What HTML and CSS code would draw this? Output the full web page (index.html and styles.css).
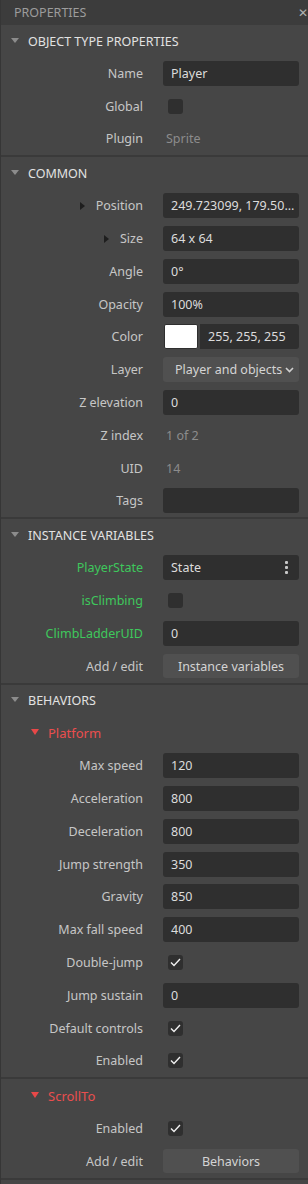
FILE: index.html
```html
<!DOCTYPE html>
<html lang="en">
<head>
    <meta charset="UTF-8">
    <meta name="viewport" content="width=device-width, initial-scale=1.0">
    <link rel="stylesheet" href="styles.css">
</head>
<body>
    <div class="panel">
        <div class="panel-title">
            <span>PROPERTIES</span>
            <span class="close-btn">✕</span>
        </div>

        <!-- object type -->
        <div class="section">
            <div class="section-head"><span class="caret"></span>OBJECT TYPE PROPERTIES</div>
            <div class="prop-grid">
                <div class="label">Name</div>
                <div class="value"><div class="field">Player</div></div>
                <div class="label">Global</div>
                <div class="value"><div class="check"></div></div>
                <div class="label">Plugin</div>
                <div class="value"><span class="readonly">Sprite</span></div>
            </div>
        </div>

        <!-- common -->
        <div class="section">
            <div class="section-head"><span class="caret"></span>COMMON</div>
            <div class="prop-grid">
                <div class="label"><span class="expander"></span>Position</div>
                <div class="value"><div class="field">249.723099, 179.50...</div></div>
                <div class="label"><span class="expander"></span>Size</div>
                <div class="value"><div class="field">64 x 64</div></div>
                <div class="label">Angle</div>
                <div class="value"><div class="field">0°</div></div>
                <div class="label">Opacity</div>
                <div class="value"><div class="field">100%</div></div>
                <div class="label">Color</div>
                <div class="value color-value">
                    <div class="swatch"></div>
                    <div class="field color-field">255, 255, 255</div>
                </div>
                <div class="label">Layer</div>
                <div class="value">
                    <div class="select">
                        Player and objects
                        <svg class="chevron" width="9" height="6" viewBox="0 0 9 6"><polyline points="1,1 4.5,4.5 8,1" fill="none" stroke="#d0d0d0" stroke-width="1.6"/></svg>
                    </div>
                </div>
                <div class="label">Z elevation</div>
                <div class="value"><div class="field">0</div></div>
                <div class="label">Z index</div>
                <div class="value"><span class="readonly">1 of 2</span></div>
                <div class="label">UID</div>
                <div class="value"><span class="readonly">14</span></div>
                <div class="label">Tags</div>
                <div class="value"><div class="field"></div></div>
            </div>
        </div>

        <!-- instance variables -->
        <div class="section">
            <div class="section-head"><span class="caret"></span>INSTANCE VARIABLES</div>
            <div class="prop-grid">
                <div class="label var">PlayerState</div>
                <div class="value">
                    <div class="field field-menu">
                        State
                        <span class="dots"><i></i><i></i><i></i></span>
                    </div>
                </div>
                <div class="label var">isClimbing</div>
                <div class="value"><div class="check"></div></div>
                <div class="label var">ClimbLadderUID</div>
                <div class="value"><div class="field">0</div></div>
                <div class="label">Add / edit</div>
                <div class="value"><div class="button">Instance variables</div></div>
            </div>
        </div>

        <!-- behaviors -->
        <div class="section">
            <div class="section-head"><span class="caret"></span>BEHAVIORS</div>
            <div class="prop-grid">
                <div class="sub-head"><span class="caret caret-red"></span>Platform</div>
                <div class="label">Max speed</div>
                <div class="value"><div class="field">120</div></div>
                <div class="label">Acceleration</div>
                <div class="value"><div class="field">800</div></div>
                <div class="label">Deceleration</div>
                <div class="value"><div class="field">800</div></div>
                <div class="label">Jump strength</div>
                <div class="value"><div class="field">350</div></div>
                <div class="label">Gravity</div>
                <div class="value"><div class="field">850</div></div>
                <div class="label">Max fall speed</div>
                <div class="value"><div class="field">400</div></div>
                <div class="label">Double-jump</div>
                <div class="value"><div class="check checked"><svg width="11" height="9" viewBox="0 0 11 9"><polyline points="1,4.5 4,7.5 10,1" fill="none" stroke="#f0f0f0" stroke-width="1.4"/></svg></div></div>
                <div class="label">Jump sustain</div>
                <div class="value"><div class="field">0</div></div>
                <div class="label">Default controls</div>
                <div class="value"><div class="check checked"><svg width="11" height="9" viewBox="0 0 11 9"><polyline points="1,4.5 4,7.5 10,1" fill="none" stroke="#f0f0f0" stroke-width="1.4"/></svg></div></div>
                <div class="label">Enabled</div>
                <div class="value"><div class="check checked"><svg width="11" height="9" viewBox="0 0 11 9"><polyline points="1,4.5 4,7.5 10,1" fill="none" stroke="#f0f0f0" stroke-width="1.4"/></svg></div></div>
            </div>
            <div class="prop-grid sub-section">
                <div class="sub-head"><span class="caret caret-red"></span>ScrollTo</div>
                <div class="label">Enabled</div>
                <div class="value"><div class="check checked"><svg width="11" height="9" viewBox="0 0 11 9"><polyline points="1,4.5 4,7.5 10,1" fill="none" stroke="#f0f0f0" stroke-width="1.4"/></svg></div></div>
                <div class="label">Add / edit</div>
                <div class="value"><div class="button">Behaviors</div></div>
            </div>
        </div>
        <div class="section end"></div>
    </div>
</body>
</html>
```

FILE: styles.css
```css
html, body {
    margin: 0;
    padding: 0;
}

body {
    background: #464646;
    font-family: 'Noto Sans', 'Open Sans', sans-serif;
    font-size: 12.5px;
    color: #c6c6c6;
}

.panel {
    width: 308px;
    min-height: 1184px;
    border-left: 1px solid #363636;
    box-sizing: border-box;
    overflow: hidden;
}

.panel-title {
    height: 25px;
    background: #3c3c3c;
    display: flex;
    align-items: center;
    justify-content: space-between;
    padding-left: 13px;
    color: #9c9c9c;
    font-size: 12.5px;
}

.close-btn {
    color: #b0b0b0;
    font-size: 12px;
    margin-right: 0;
}

.section {
    border-top: 2px solid #3a3a3a;
}

.section:nth-child(2) {
    border-top: none;
}

.section-head {
    height: 32px;
    display: flex;
    align-items: center;
    padding-left: 10px;
    color: #e2e2e2;
    font-size: 12.5px;
}

.caret {
    width: 0;
    height: 0;
    border-left: 4px solid transparent;
    border-right: 4px solid transparent;
    border-top: 5px solid #8c8c8c;
    margin-right: 9px;
    margin-top: -2px;
}

.caret-red {
    border-top-color: #e84848;
    border-left-width: 4.5px;
    border-right-width: 4.5px;
    border-top-width: 6px;
    margin-right: 9px;
}

.prop-grid {
    display: grid;
    grid-template-columns: 142px 1fr;
    grid-auto-rows: 32.8px;
    column-gap: 20px;
    padding-right: 9px;
}

.sub-section {
    border-top: 2px solid #3a3a3a;
}

.sub-head {
    grid-column: 1 / 3;
    display: flex;
    align-items: center;
    padding-left: 30px;
    color: #ea4e4e;
    font-size: 13px;
}

.label {
    display: flex;
    align-items: center;
    justify-content: flex-end;
    white-space: nowrap;
}

.label.var {
    color: #3ec85c;
}

.expander {
    width: 0;
    height: 0;
    border-top: 4px solid transparent;
    border-bottom: 4px solid transparent;
    border-left: 5px solid #1e1e1e;
    margin-right: 11px;
}

.value {
    display: flex;
    align-items: center;
    min-width: 0;
}

.field {
    flex: 1;
    height: 25px;
    background: #2f2f2f;
    border-radius: 3px;
    display: flex;
    align-items: center;
    padding-left: 8px;
    color: #dcdcdc;
    white-space: nowrap;
    overflow: hidden;
}

.field-menu {
    justify-content: space-between;
}

.dots {
    display: flex;
    flex-direction: column;
    gap: 2px;
    margin-right: 11px;
}

.dots i {
    width: 3px;
    height: 3px;
    background: #c8c8c8;
    border-radius: 1px;
}

.readonly {
    color: #8c8c8c;
    padding-left: 3px;
}

.check {
    width: 15px;
    height: 15px;
    background: #2f2f2f;
    border-radius: 3px;
    margin-left: 5px;
    display: flex;
    align-items: center;
    justify-content: center;
}

.color-value {
    gap: 2px;
}

.swatch {
    width: 32px;
    height: 23px;
    background: #ffffff;
    border: 1px solid #2f2f2f;
    border-radius: 2px;
    margin-left: 1px;
}

.color-field {
    border-radius: 0 3px 3px 0;
}

.select {
    flex: 1;
    height: 25px;
    background: #505050;
    border-radius: 3px;
    display: flex;
    align-items: center;
    justify-content: space-between;
    padding: 0 5px 0 12px;
    color: #d4d4d4;
    white-space: nowrap;
}

.chevron {
    flex-shrink: 0;
}

.button {
    flex: 1;
    height: 24px;
    background: #505050;
    border-radius: 3px;
    display: flex;
    align-items: center;
    justify-content: center;
    color: #d4d4d4;
}

.section.end {
    height: 20px;
}
```
